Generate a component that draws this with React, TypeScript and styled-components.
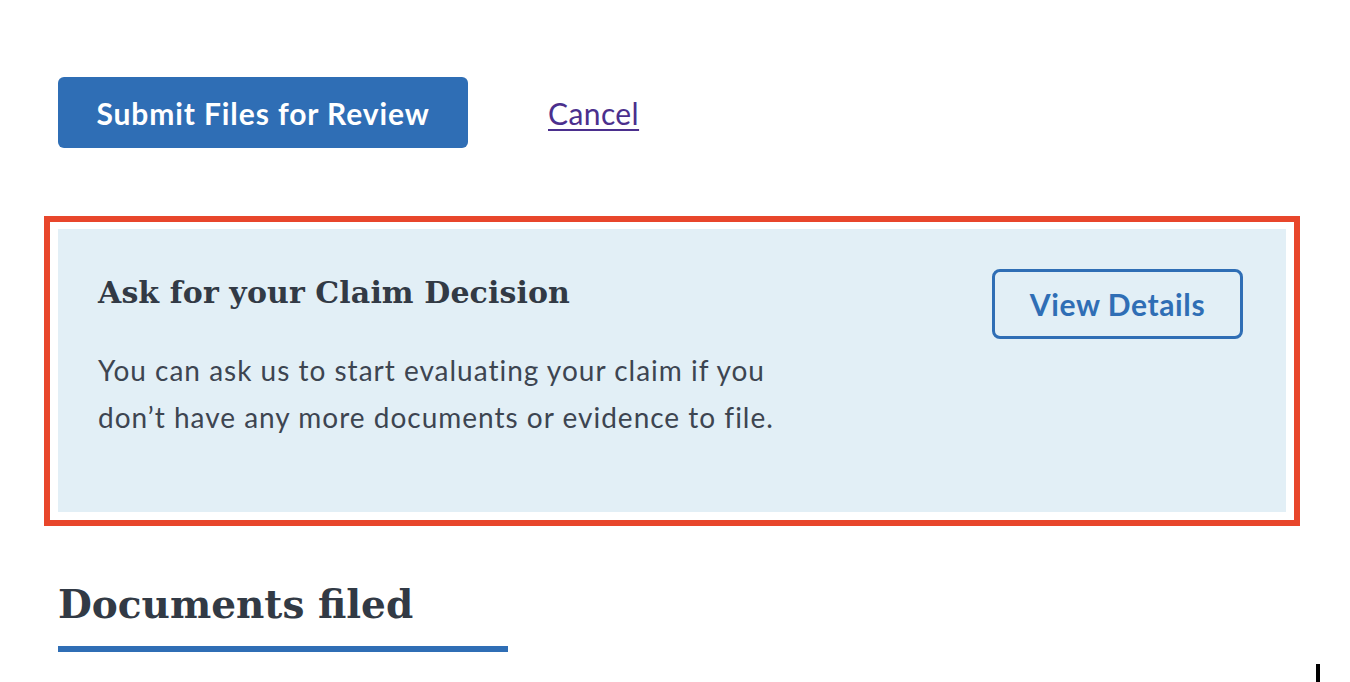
import React from "react";
import styled, { createGlobalStyle } from "styled-components";

const GlobalStyle = createGlobalStyle`
  html, body { margin: 0; padding: 0; background: #ffffff; }
  body { font-family: "Lato", "Liberation Sans", sans-serif; }
  * { box-sizing: border-box; }
`;

const Page = styled.main`
  position: relative;
  width: 1350px;
  height: 682px;
  overflow: hidden;
  padding: 77px 66px 0 58px;
  display: flex;
  flex-direction: column;
`;

const Actions = styled.div`
  display: flex;
  align-items: center;
  gap: 80px;
`;

const PrimaryButton = styled.button`
  width: 410px;
  height: 71px;
  border: none;
  border-radius: 6px;
  background: #2f6eb5;
  color: #ffffff;
  font-family: "Lato", sans-serif;
  font-weight: 700;
  font-size: 30px;
  letter-spacing: 0.9px;
  cursor: pointer;
`;

const CancelLink = styled.a`
  color: #4b2f8d;
  font-family: "Lato", sans-serif;
  font-size: 30px;
  letter-spacing: 0.4px;
  text-decoration: underline;
  text-underline-offset: 4px;
  text-decoration-thickness: 2px;
`;

const FocusRing = styled.div`
  margin: 68px -16px 0 -14px;
  border: 6px solid #e8462b;
  padding: 7px 8px 8px 8px;
  background: #ffffff;
`;

const Card = styled.section`
  background: #e2eff6;
  height: 283px;
  padding: 40px 43px 0 40px;
  display: flex;
  justify-content: space-between;
  align-items: flex-start;
`;

const CardText = styled.div`
  display: flex;
  flex-direction: column;
`;

const CardTitle = styled.h3`
  margin: 0;
  padding-top: 2px;
  font-family: "DejaVu Serif", serif;
  font-weight: 700;
  font-size: 30px;
  letter-spacing: 0.1px;
  line-height: 44px;
  color: #323a45;
`;

const CardBody = styled.p`
  margin: 32px 0 0;
  width: 700px;
  font-family: "Lato", sans-serif;
  font-size: 28px;
  letter-spacing: 1px;
  line-height: 47px;
  color: #3d4551;
`;

const OutlineButton = styled.button`
  width: 251px;
  height: 70px;
  border: 3px solid #2f6eb5;
  border-radius: 8px;
  background: transparent;
  color: #2f6eb5;
  font-family: "Lato", sans-serif;
  font-weight: 700;
  font-size: 30px;
  letter-spacing: 0.6px;
  cursor: pointer;
`;

const SectionTitle = styled.h2`
  margin: 50px 0 0;
  font-family: "DejaVu Serif", serif;
  font-weight: 700;
  font-size: 39px;
  line-height: 56px;
  color: #323a45;
`;

const Rule = styled.div`
  margin-top: 14px;
  width: 450px;
  height: 6px;
  background: #2f6eb5;
`;

const Caret = styled.span`
  position: absolute;
  left: 1316px;
  top: 664px;
  width: 4px;
  height: 18px;
  background: #000000;
`;

export default function App() {
  return (
    <>
      <GlobalStyle />
      <Page>
        <Actions>
          <PrimaryButton>Submit Files for Review</PrimaryButton>
          <CancelLink href="#">Cancel</CancelLink>
        </Actions>
        <FocusRing>
          <Card>
            <CardText>
              <CardTitle>Ask for your Claim Decision</CardTitle>
              <CardBody>
                You can ask us to start evaluating your claim if you don’t have any more documents or evidence to file.
              </CardBody>
            </CardText>
            <OutlineButton>View Details</OutlineButton>
          </Card>
        </FocusRing>
        <SectionTitle>Documents filed</SectionTitle>
        <Rule />
        <Caret />
      </Page>
    </>
  );
}
